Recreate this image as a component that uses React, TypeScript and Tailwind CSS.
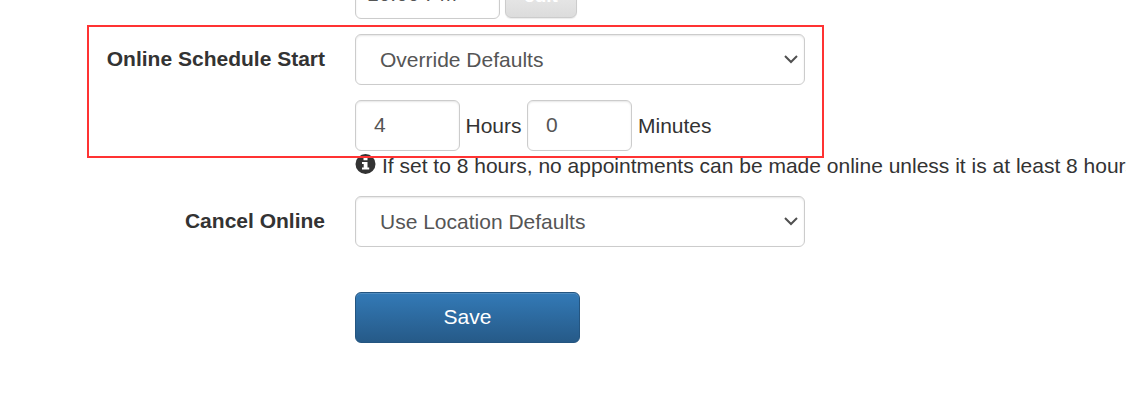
import React from 'react';

const FIELD = 'flex items-center rounded-[6px] border border-[#ccc] bg-white text-[#555] shadow-[inset_0_1px_2px_rgba(0,0,0,0.1)]';

function Label({ children }: { children: React.ReactNode }) {
  return <div className="w-[325px] shrink-0 text-right font-bold leading-[50px]">{children}</div>;
}

function SelectField({ value }: { value: string }) {
  return (
    <div className={`${FIELD} h-[51px] w-[450px] justify-between pl-6 pr-[5px]`}>
      <span>{value}</span>
      <svg className="mb-px h-4 w-4" viewBox="0 0 16 16" fill="none" stroke="#505050" strokeWidth="2">
        <path d="M2 5 L8 11 L14 5" />
      </svg>
    </div>
  );
}

function NumberField({ value }: { value: string }) {
  return <div className={`${FIELD} h-[51px] w-[105px] pl-[18px] pb-[1px]`}>{value}</div>;
}

function InfoIcon() {
  return (
    <svg className="-mt-1 h-5 w-[21px] shrink-0" viewBox="0 0 21 20">
      <circle cx="10.5" cy="10" r="10" fill="#333" />
      <path d="M8.5 3.5h4v2.7h-4zM7 8h5.5v5.5h1.7v2H7v-2h1.7V10H7z" fill="#fff" />
    </svg>
  );
}

export default function App() {
  return (
    <div className="relative h-[406px] w-[1126px] overflow-hidden bg-white font-['Liberation_Sans',Arial,sans-serif] text-[21px] leading-[30px] text-[#333]">
      <div className="-mt-8 flex gap-[5px] pl-[355px]">
        <div className={`${FIELD} h-[51px] w-[145px] pl-[11px]`}>10:00 PM</div>
        <div className="flex h-[50px] w-[72px] items-center justify-center rounded-[6px] border border-[#ccc] bg-linear-to-b from-[#f4f4f4] to-[#dcdcdc] pt-[5px] text-[19px] font-bold text-white shadow-[0_1px_1px_rgba(0,0,0,0.08)]">
          edit
        </div>
      </div>

      <div className="mt-[15px] flex gap-[30px]">
        <Label>Online Schedule Start</Label>
        <div>
          <SelectField value="Override Defaults" />
          <div className="mt-[15px] flex items-center">
            <NumberField value="4" />
            <span className="w-[67px] pl-[5.5px]">Hours</span>
            <NumberField value="0" />
            <span className="pl-[6px]">Minutes</span>
          </div>
          <div className="flex items-center gap-[6px] whitespace-nowrap">
            <InfoIcon />
            <span>If set to 8 hours, no appointments can be made online unless it is at least 8 hours</span>
          </div>
        </div>
      </div>

      <div className="mt-[15px] flex gap-[30px]">
        <Label>Cancel Online</Label>
        <SelectField value="Use Location Defaults" />
      </div>

      <button className="ml-[355px] mt-[45px] flex h-[51px] w-[225px] items-center justify-center rounded-[6px] border border-[#245580] bg-linear-to-b from-[#337ab7] to-[#265a88] pb-px text-white shadow-[inset_0_1px_0_rgba(255,255,255,0.15)]">
        Save
      </button>

      {/* highlight frame drawn over the form */}
      <div className="pointer-events-none absolute left-[87px] top-[25px] h-[133px] w-[737px] border-2 border-[#ff3333]" />
    </div>
  );
}
